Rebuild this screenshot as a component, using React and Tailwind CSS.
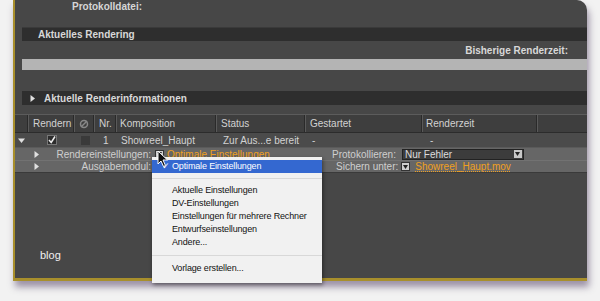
import React from 'react';

const font = { fontFamily: '"Liberation Sans", Arial, sans-serif' };

// header column separators: dark line + light line
const Sep = () => <div className="h-full w-[2px] border-l border-[#2a2a2a] bg-[#5a5a5a] shrink-0" />;

const Tri = ({ down = false, className = '' }) => (
  <svg width="7" height="7" viewBox="0 0 7 7" className={className}>
    {down ? <path d="M0 1.5 L7 1.5 L3.5 6 Z" fill="#e0e0e0" /> : <path d="M1.5 0 L6 3.5 L1.5 7 Z" fill="#e0e0e0" />}
  </svg>
);

const MiniDrop = () => (
  <div className="w-[9px] h-[9px] bg-[#cfcfcf] border border-[#333] flex items-center justify-center shrink-0">
    <svg width="5" height="4" viewBox="0 0 5 4"><path d="M0 0 L5 0 L2.5 4 Z" fill="#222" /></svg>
  </div>
);

const Cursor = () => (
  <svg width="12" height="18" viewBox="0 0 12 18" className="absolute left-[157px] top-[150px]">
    <path d="M1 1 L1 14 L4 11 L6.5 16.5 L8.5 15.5 L6 10 L10.5 10 Z" fill="#111" stroke="#fff" strokeWidth="1" />
  </svg>
);

export default function App() {
  return (
    <div className="w-[600px] h-[301px] bg-[#f2f2f2] relative overflow-hidden text-[10px]" style={font}>
      <div className="ml-[13px] w-[574px] h-[281px] bg-[#474747] border-l-2 border-b-[3px] border-[#a88f2c] rounded-tr-[10px] shadow-[2px_6px_7px_rgba(70,50,90,0.5)] flex flex-col">
        <div className="h-[27px] pl-[57px] pt-[1px] font-bold text-[#d6d6d6] leading-[12px]">Protokolldatei:</div>
        <div className="h-[14px] ml-[7px] bg-[#2e2e2e] border-t border-[#3a3a3a] flex items-center pl-[16px] font-bold text-[#d8d8d8]">Aktuelles Rendering</div>
        <div className="h-[18px] flex items-center justify-end pr-[19px] font-bold text-[#d8d8d8]">Bisherige Renderzeit:</div>
        <div className="h-[11px] ml-[7px] bg-[#b4b4b4]" />
        <div className="h-[21px]" />
        <div className="h-[14px] ml-[7px] bg-[#2e2e2e] flex items-center pl-[7px] gap-[8px] font-bold text-[#d8d8d8]">
          <Tri />
          <span>Aktuelle Renderinformationen</span>
        </div>
        <div className="h-[9px]" />

        {/* table header */}
        <div className="h-[19px] bg-[#3e3e3e] border-t border-[#5c5c5c] border-b border-b-[#2c2c2c] flex items-center text-[#d2d2d2]">
          <div className="w-[12px]" /><Sep />
          <div className="w-[44px] pl-[4px]">Rendern</div><Sep />
          <div className="w-[18px] flex justify-center">
            <svg width="10" height="10" viewBox="0 0 10 10"><circle cx="5" cy="5" r="3.5" fill="none" stroke="#888" strokeWidth="1.5" /><path d="M2 8 L8 2" stroke="#888" strokeWidth="1.5" /></svg>
          </div><Sep />
          <div className="w-[20px] pl-[4px]">Nr.</div><Sep />
          <div className="w-[98px] pl-[3px]">Komposition</div><Sep />
          <div className="w-[87px] pl-[4px]">Status</div><Sep />
          <div className="w-[115px] pl-[4px]">Gestartet</div><Sep />
          <div className="w-[113px] pl-[3px]">Renderzeit</div><Sep />
          <div className="flex-1" />
        </div>

        {/* row 1 */}
        <div className="h-[14px] bg-[#4b4b4b] flex items-center text-[#d2d2d2]">
          <div className="w-[14px] pl-[3px] flex"><Tri down /></div>
          <div className="w-[46px] flex justify-center">
            <div className="w-[10px] h-[10px] bg-[#2c2c2c] border border-[#777] flex items-center justify-center">
              <svg width="8" height="8" viewBox="0 0 8 8"><path d="M1 4 L3.2 6.5 L7 0.5" fill="none" stroke="#eee" strokeWidth="1.5" /></svg>
            </div>
          </div>
          <div className="w-[20px] flex justify-center"><div className="w-[9px] h-[9px] bg-[#3a3a3a]" /></div>
          <div className="w-[22px] pl-[8px]">1</div>
          <div className="w-[100px] pl-[4px]">Showreel_Haupt</div>
          <div className="w-[89px] pl-[6px]">Zur Aus...e bereit</div>
          <div className="w-[117px] pl-[6px]">-</div>
          <div className="pl-[7px]">-</div>
        </div>

        {/* row 2 */}
        <div className="h-[13px] bg-[#666666] border-t border-[#5a5a5a] flex items-center text-[#cfcfcf]">
          <div className="w-[136px] flex items-center pl-[18px]">
            <Tri />
            <span className="ml-auto">Rendereinstellungen:</span>
          </div>
          <div className="ml-[4px]"><MiniDrop /></div>
          <span className="ml-[3px] w-[165px] text-[#f0a020] underline decoration-dotted">Optimale Einstellungen</span>
          <span>Protokollieren:</span>
          <div className="ml-[6px] w-[122px] h-[11px] bg-[#3c3c3c] border border-[#222] flex items-center justify-between pl-[2px] pr-[1px] text-[#dcdcdc]">
            <span>Nur Fehler</span>
            <div className="w-[8px] h-[8px] bg-[#c8c8c8] flex items-center justify-center">
              <svg width="5" height="4" viewBox="0 0 5 4"><path d="M0 0 L5 0 L2.5 4 Z" fill="#222" /></svg>
            </div>
          </div>
        </div>

        {/* row 3 */}
        <div className="h-[13px] bg-[#666666] border-t border-[#727272] border-b border-b-[#3a3a3a] flex items-center text-[#cfcfcf]">
          <div className="w-[136px] flex items-center pl-[18px]">
            <Tri />
            <span className="ml-auto">Ausgabemodul:</span>
          </div>
          <div className="w-[185px]" />
          <span>Sichern unter:</span>
          <div className="ml-[3px]"><MiniDrop /></div>
          <span className="ml-[5px] text-[#f0a020] underline decoration-dotted">Showreel_Haupt.mov</span>
        </div>

        <div className="flex-1 relative">
          <span className="absolute left-[25px] top-[74px] text-[11px] text-[#f0f0f0]">blog</span>
        </div>
      </div>

      {/* popup menu */}
      <div className="absolute left-[152px] top-[157px] w-[170px] h-[126px] bg-[#f1f1f1] shadow-[1px_2px_4px_rgba(0,0,0,0.45)] pt-[3px] text-[#111] text-[9px] tracking-[-0.15px] leading-[13px] whitespace-nowrap">
        <div className="h-[13px] bg-[#3468d0] text-white flex items-center">
          <span className="w-[20px] pl-[10px]">✓</span>
          <span>Optimale Einstellungen</span>
        </div>
        <div className="h-[11px] flex items-center"><div className="w-full h-px bg-[#d8d8d8]" /></div>
        <div className="pl-[20px] flex flex-col">
          <span>Aktuelle Einstellungen</span>
          <span>DV-Einstellungen</span>
          <span>Einstellungen für mehrere Rechner</span>
          <span>Entwurfseinstellungen</span>
          <span>Andere...</span>
        </div>
        <div className="h-[13px] flex items-center"><div className="w-full h-px bg-[#d8d8d8]" /></div>
        <div className="pl-[20px]">Vorlage erstellen...</div>
      </div>
      <Cursor />
    </div>
  );
}
